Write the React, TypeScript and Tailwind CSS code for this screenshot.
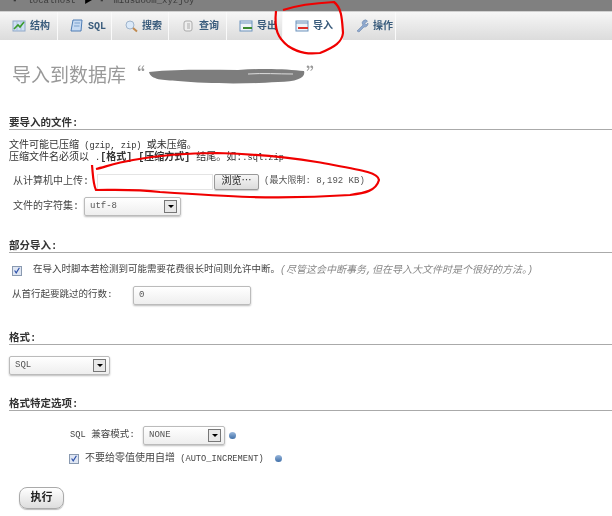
import React from "react";

const cjk = "font-['Liberation_Mono','Noto_Sans_CJK_SC',monospace]";

function Tab({ w, label, active, icon }: { w: string; label: string; active?: boolean; icon: React.ReactNode }) {
  return (
    <div className={`${w} h-full flex items-center pl-[12px] gap-[4px] border-r border-[#fafafa] text-[10px] font-bold text-[#3a5c7c] ${active ? "bg-white" : "bg-gradient-to-b from-[#f6f6f6] to-[#dcdcdc]"}`}>
      <span className="block w-[14px] h-[14px] shrink-0">{icon}</span>
      <span className="whitespace-nowrap pt-[1px]">{label}</span>
    </div>
  );
}

const Svg = ({ children }: { children: React.ReactNode }) => (
  <svg viewBox="0 0 14 14" className="w-[14px] h-[14px]">{children}</svg>
);

function Heading({ text, className }: { text: string; className: string }) {
  return (
    <div className={`ml-[9px] text-[10.5px] leading-[11px] font-bold text-[#333] border-b border-[#aaa] ${className}`}>{text}</div>
  );
}

function Sel({ w, text, className = "" }: { w: string; text: string; className?: string }) {
  return (
    <div className={`${w} h-[19px] ${className} flex items-center justify-between pl-[5px] pr-[3px] rounded-[2px] border border-[#bbb] shadow-[0_1px_2px_#bbb] bg-gradient-to-b from-white to-[#eee] text-[9px] text-[#555]`}>
      <span>{text}</span>
      <span className="w-[13px] h-[13px] border border-[#777] bg-[#e8e8e8] flex items-center justify-center">
        <span className="w-0 h-0 border-l-[3px] border-r-[3px] border-t-[3px] border-l-transparent border-r-transparent border-t-black" />
      </span>
    </div>
  );
}

const Check = () => (
  <span className="w-[10px] h-[10px] shrink-0 border border-[#8a9ab0] bg-[#dfe6f3] flex items-center justify-center">
    <svg viewBox="0 0 10 10" className="w-[9px] h-[9px]"><path d="M2 5 L4 8 L8 1.5" fill="none" stroke="#2a4fa8" strokeWidth="1.4" /></svg>
  </span>
);

const Info = ({ className }: { className: string }) => (
  <span className={`block w-[7px] h-[7px] rounded-full bg-gradient-to-b from-[#9ab8dc] to-[#3f6fa8] shrink-0 ${className}`} />
);

const L = ({ children }: { children: React.ReactNode }) => <span className="text-[8.7px]">{children}</span>;

export default function App() {
  return (
    <div className={`relative w-[612px] h-[516px] overflow-hidden bg-white text-[#333] blur-[0.35px] ${cjk}`}>
      <div className="h-[11px] bg-[#808080] flex items-center pl-[12px] text-[9px] text-[#3a3a3a] overflow-hidden">
        <span className="-mt-[8px] whitespace-nowrap">▪</span>
        <span className="-mt-[8px] ml-[10px] whitespace-nowrap">localhost</span>
        <span className="-mt-[8px] ml-[8px] text-black">▶</span>
        <span className="-mt-[8px] ml-[6px]">▪</span>
        <span className="-mt-[8px] ml-[9px] whitespace-nowrap">miusdoom_xyzjoy</span>
      </div>
      <div className="h-[1px] bg-[#d0d0d0]" />
      <div className="h-[28px] flex bg-gradient-to-b from-[#f6f6f6] to-[#dcdcdc]">
        <Tab w="w-[58px]" label="结构" icon={<Svg><rect x="1" y="2" width="12" height="10" fill="#cfe0f4" stroke="#8fa8c8" /><path d="M5 2 V12 M9 2 V12" stroke="#a9bfdc" /><path d="M2 10 L6 6 L8 8 L12 3" stroke="#3a9a2a" strokeWidth="1.6" fill="none" /></Svg>} />
        <Tab w="w-[54px]" label="SQL" icon={<Svg><path d="M3 1 H12 L11 12 H1 Z" fill="#c6daf2" stroke="#4f7db4" /><path d="M4.5 4 H10 M4 7 H9.5" stroke="#7ba0cc" /></Svg>} />
        <Tab w="w-[57px]" label="搜索" icon={<Svg><circle cx="6" cy="6" r="4" fill="#dbe9f8" stroke="#9fb4cc" /><path d="M9 9 L13 12.5" stroke="#c08a50" strokeWidth="2" /></Svg>} />
        <Tab w="w-[58px]" label="查询" icon={<Svg><rect x="3" y="2" width="8" height="10" rx="2" fill="#eee" stroke="#aaa" /><rect x="6" y="4" width="3" height="6" fill="#ccc" /></Svg>} />
        <Tab w="w-[56px]" label="导出" icon={<Svg><rect x="1" y="2" width="12" height="10" fill="#f0f4f8" stroke="#6c93bd" /><path d="M1 4 H13" stroke="#6c93bd" /><path d="M4 9 H13" stroke="#3c8a2e" strokeWidth="2" /></Svg>} />
        <Tab w="w-[60px]" active label="导入" icon={<Svg><rect x="1" y="2" width="12" height="10" fill="#f0f4f8" stroke="#6c93bd" /><path d="M1 4 H13" stroke="#6c93bd" /><path d="M3 9 H13" stroke="#e0302a" strokeWidth="2" /></Svg>} />
        <Tab w="w-[53px]" label="操作" icon={<Svg><path d="M2 12 L8 6 A3 3 0 0 1 12.5 2 L10 4.5 L11 6 L13 4 A3.5 3.5 0 0 1 9 8 L4 13 Z" fill="#8fa9cf" stroke="#6d86ab" strokeWidth="0.6" /></Svg>} />
      </div>

      <div className="mt-[24px] ml-[12px] h-[20px] flex items-center text-[19px] leading-[20px] font-['Noto_Sans_CJK_SC',sans-serif] text-[#999]">
        <span>导入到数据库“</span>
        <svg width="158" height="16" viewBox="0 0 158 16" className="ml-[3px] mt-[3px] shrink-0">
          <path d="M1 4 C30 1 60 2 90 2 C115 0 140 1 156 3 C158 9 150 14 130 14 C100 16 60 16 30 13 C15 12 3 12 1 4 Z" fill="#7d7d7d" />
          <path d="M100 6 C115 5 130 6 145 6" stroke="#ddd" strokeWidth="1" fill="none" />
        </svg>
        <span>”</span>
      </div>

      <Heading text="要导入的文件:" className="mt-[34px]" />
      <div className="ml-[9px] mt-[10px] text-[10px] leading-[12px] text-[#333]">
        <div>文件可能已压缩<L> (gzip, zip) </L>或未压缩。</div>
        <div>压缩文件名必须以 <L>.</L><b>[格式]</b> <b>[压缩方式]</b> 结尾。如:<L>.sql.zip</L></div>
      </div>
      <div className="mt-[9px] ml-[13px] h-[17px] flex items-center text-[10px] text-[#444]">
        <span className="w-[84px] whitespace-nowrap">从计算机中上传:</span>
        <div className="w-[116px] h-[16px] border border-[#e4e4e4] bg-white" />
        <div className="ml-[1px] w-[45px] h-[16px] rounded-[2px] border border-[#999] bg-gradient-to-b from-[#f6f6f6] to-[#dcdcdc] flex items-center justify-center text-[10px] text-[#222] shadow-[0_1px_1px_#ccc]">浏览⋯</div>
        <span className="ml-[5px] text-[9px] text-[#555] whitespace-nowrap">(最大限制: 8,192 KB)</span>
      </div>
      <div className="mt-[7px] ml-[13px] h-[19px] flex items-center text-[10px] text-[#444]">
        <span className="w-[71px] whitespace-nowrap">文件的字符集:</span>
        <Sel w="w-[97px]" text="utf-8" />
      </div>

      <Heading text="部分导入:" className="mt-[25px]" />
      <div className="mt-[12px] ml-[12px] h-[11px] flex items-center text-[9.5px] text-[#444] whitespace-nowrap">
        <Check />
        <span className="ml-[11px]">在导入时脚本若检测到可能需要花费很长时间则允许中断。</span>
        <i className="text-[#888] text-[10px]">(尽管这会中断事务,但在导入大文件时是个很好的方法。)</i>
      </div>
      <div className="mt-[10px] ml-[12px] h-[19px] flex items-center text-[9.5px] text-[#444]">
        <span className="w-[121px] whitespace-nowrap">从首行起要跳过的行数:</span>
        <div className="w-[118px] h-[19px] pl-[5px] flex items-center text-[9px] rounded-[2px] border border-[#bbb] shadow-[0_1px_2px_#bbb] bg-gradient-to-b from-white to-[#eee] text-[#555]">0</div>
      </div>

      <Heading text="格式:" className="mt-[28px]" />
      <Sel w="w-[101px]" text="SQL" className="ml-[9px] mt-[11px]" />

      <Heading text="格式特定选项:" className="mt-[24px]" />
      <div className="mt-[15px] ml-[70px] h-[19px] flex items-center text-[9.5px] text-[#444]">
        <span className="w-[73px] whitespace-nowrap"><L>SQL</L> 兼容模式:</span>
        <Sel w="w-[82px]" text="NONE" />
        <Info className="ml-[4px]" />
      </div>
      <div className="mt-[8px] ml-[69px] h-[11px] flex items-center text-[10px] text-[#444] whitespace-nowrap">
        <Check />
        <span className="ml-[6px]">不要给零值使用自增<L> (AUTO_INCREMENT)</L></span>
        <Info className="ml-[11px]" />
      </div>

      <div className="mt-[23px] ml-[19px] w-[45px] h-[22px] rounded-[8px] border border-[#aaa] bg-gradient-to-b from-white to-[#ddd] shadow-[0_1px_1px_#bbb] flex items-center justify-center text-[11px] font-bold text-[#222]">执行</div>

      <svg className="absolute inset-0 pointer-events-none" width="612" height="516" viewBox="0 0 612 516">
        <path d="M283 10 C295 6 315 3 334 2 C342 8 342 20 343 33 C342 42 335 47 320 53 C310 54 300 54 288 46 C278 38 274 30 276 11" fill="none" stroke="#f00000" strokeWidth="2.2" />
        <path d="M92 165 C93 175 93 184 96 190 C115 190 135 189 160 192 C190 194 220 196 250 197 C290 198 320 197 350 195 C365 193 376 191 379 180 C378 172 360 170 317 162 C280 156 250 154 217 153 C190 153 160 155 133 160 C115 163 105 167 96 169" fill="none" stroke="#f00000" strokeWidth="2.2" />
      </svg>
    </div>
  );
}
